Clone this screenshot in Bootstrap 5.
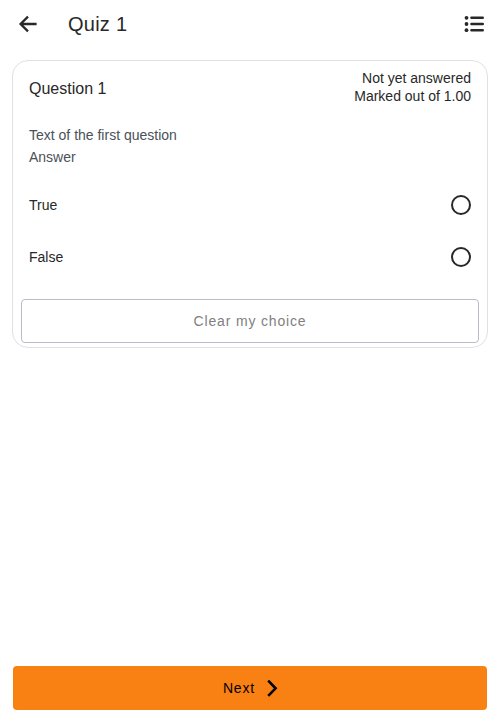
<!DOCTYPE html>
<html lang="en">
<head>
<meta charset="utf-8">
<meta name="viewport" content="width=device-width, initial-scale=1">
<title>Quiz 1</title>
<link href="https://cdn.jsdelivr.net/npm/bootstrap@5.3.0/dist/css/bootstrap.min.css" rel="stylesheet">
<style>
body { font-family: "Liberation Sans", Arial, sans-serif; font-size: 14px; color: #282828; background: #fff; }
.topbar { height: 48px; padding: 0 14px; }
.topbar h1 { font-size: 20px; line-height: 24px; letter-spacing: .24px; margin-left: 26px; }
.icon-btn { width: 28px; height: 28px; color: #282828; }
.question { margin: 12px 12px 0; height: 288px; border: 1px solid #dee2e6; border-radius: 16px; }
.question-head { height: 54px; }
.question-head h2 { font-size: 16px; padding-top: 2px; }
.status { line-height: 18px; padding-top: 8px; }
.prompt { color: #4a5158; line-height: 22px; padding-top: 9px; height: 64px; }
.option { height: 52px; }
.option .form-check-input { width: 20px; height: 20px; border: 2px solid #282828; }
.clear-btn { margin: 16px 8px 0; height: 44px; font-size: 14px; letter-spacing: .84px; color: #808080; border: 1px solid #babbc6; border-radius: 4px; }
.next-btn { margin: 0 13px 10px; height: 44px; font-size: 14px; letter-spacing: .84px; color: #000; background: #f98012; border: 0; border-radius: 4px; }
.next-btn svg { margin-left: 8px; margin-right: -6px; }
</style>
<script src="https://cdn.jsdelivr.net/npm/bootstrap@5.3.0/dist/js/bootstrap.bundle.min.js"></script>
</head>
<body class="d-flex flex-column vh-100 overflow-hidden">
<header class="topbar d-flex align-items-center flex-shrink-0">
  <button class="icon-btn btn p-0 border-0 d-flex align-items-center justify-content-center" type="button" aria-label="Back">
    <svg width="28" height="28" viewBox="0 0 28 28" fill="none" stroke="currentColor" stroke-width="2.3"><path d="M22.6 14H7M14 6.6L6.6 14l7.4 7.4"/></svg>
  </button>
  <h1 class="mb-0 fw-normal">Quiz 1</h1>
  <button class="icon-btn btn p-0 border-0 d-flex ms-auto" type="button" aria-label="Question list">
    <svg width="28" height="28" viewBox="0 0 28 28" fill="currentColor"><circle cx="8.5" cy="7.8" r="1.9"/><circle cx="8.5" cy="14" r="1.9"/><circle cx="8.5" cy="20.2" r="1.9"/><path d="M13.4 7.8h11.4M13.4 14h11.4M13.4 20.2h11.4" stroke="currentColor" stroke-width="2.4" stroke-linecap="round"/></svg>
  </button>
</header>
<main class="flex-grow-1">
  <section class="question d-flex flex-column">
    <div class="question-head d-flex justify-content-between px-3">
      <h2 class="mb-0 fw-normal align-self-center">Question 1</h2>
      <div class="status text-end">Not yet answered<br>Marked out of 1.00</div>
    </div>
    <div class="prompt px-3">Text of the first question<br>Answer</div>
    <label class="option d-flex align-items-center justify-content-between px-3">True
      <input class="form-check-input m-0" type="radio" name="answer"></label>
    <label class="option d-flex align-items-center justify-content-between px-3">False
      <input class="form-check-input m-0" type="radio" name="answer"></label>
    <button class="clear-btn btn p-0" type="button">Clear my choice</button>
  </section>
</main>
<button class="next-btn btn p-0 flex-shrink-0 d-flex align-items-center justify-content-center" type="button">Next
  <svg width="20" height="20" viewBox="0 0 20 20" fill="none" stroke="currentColor" stroke-width="2.6"><path d="M5.2 2.6L12.6 10.3 5.2 17.9"/></svg>
</button>
</body>
</html>
